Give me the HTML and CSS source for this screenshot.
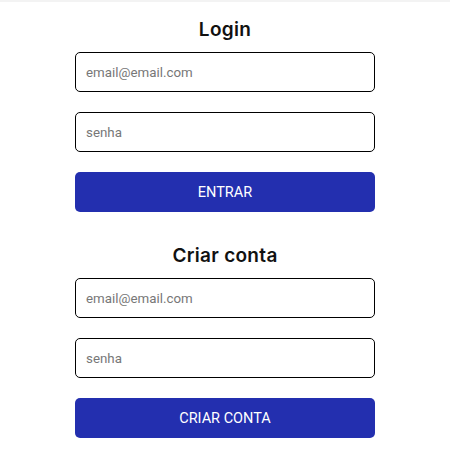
FILE: index.html
```html
<!DOCTYPE html>
<html lang="pt">
<head>
<meta charset="utf-8">
<link rel="stylesheet" href="styles.css">
</head>
<body>
<div class="topbar"></div>
<main class="page">
  <section class="card">
    <h2 class="title">Login</h2>
    <form class="form">
      <input class="field" type="email" placeholder="email@email.com">
      <input class="field" type="password" placeholder="senha">
      <button class="btn" type="button">ENTRAR</button>
    </form>
  </section>
  <section class="card">
    <h2 class="title">Criar conta</h2>
    <form class="form">
      <input class="field" type="email" placeholder="email@email.com">
      <input class="field" type="password" placeholder="senha">
      <button class="btn" type="button">CRIAR CONTA</button>
    </form>
  </section>
</main>
</body>
</html>
```
FILE: styles.css
```css
* { box-sizing: border-box; }
body {
  margin: 0;
  background: #fff;
  font-family: Roboto, "Liberation Sans", sans-serif;
}
.topbar {
  height: 2px;
  background: #f3f3f3;
}
.page {
  width: 300px;
  margin: 0 auto;
  padding-top: 16px;
  display: flex;
  flex-direction: column;
  gap: 32px;
}
.title {
  margin: 0 0 10px;
  text-align: center;
  font-family: Inter, "Noto Sans", sans-serif;
  font-weight: 600;
  font-size: 19px;
  line-height: 24px;
  letter-spacing: 0.3px;
  color: #111;
}
.form {
  display: flex;
  flex-direction: column;
  gap: 20px;
}
.field {
  height: 40px;
  width: 100%;
  border: 1px solid #000;
  border-radius: 5px;
  padding: 0 10px;
  font-family: Roboto, "Liberation Sans", sans-serif;
  font-size: 13.333px;
  color: #222;
  background: #fff;
}
.field::placeholder { color: #777; }
.btn {
  height: 40px;
  width: 100%;
  border: none;
  border-radius: 5px;
  background: #232faf;
  color: #fff;
  font-family: Roboto, "Liberation Sans", sans-serif;
  font-size: 14.5px;
  font-weight: 400;
}
```
